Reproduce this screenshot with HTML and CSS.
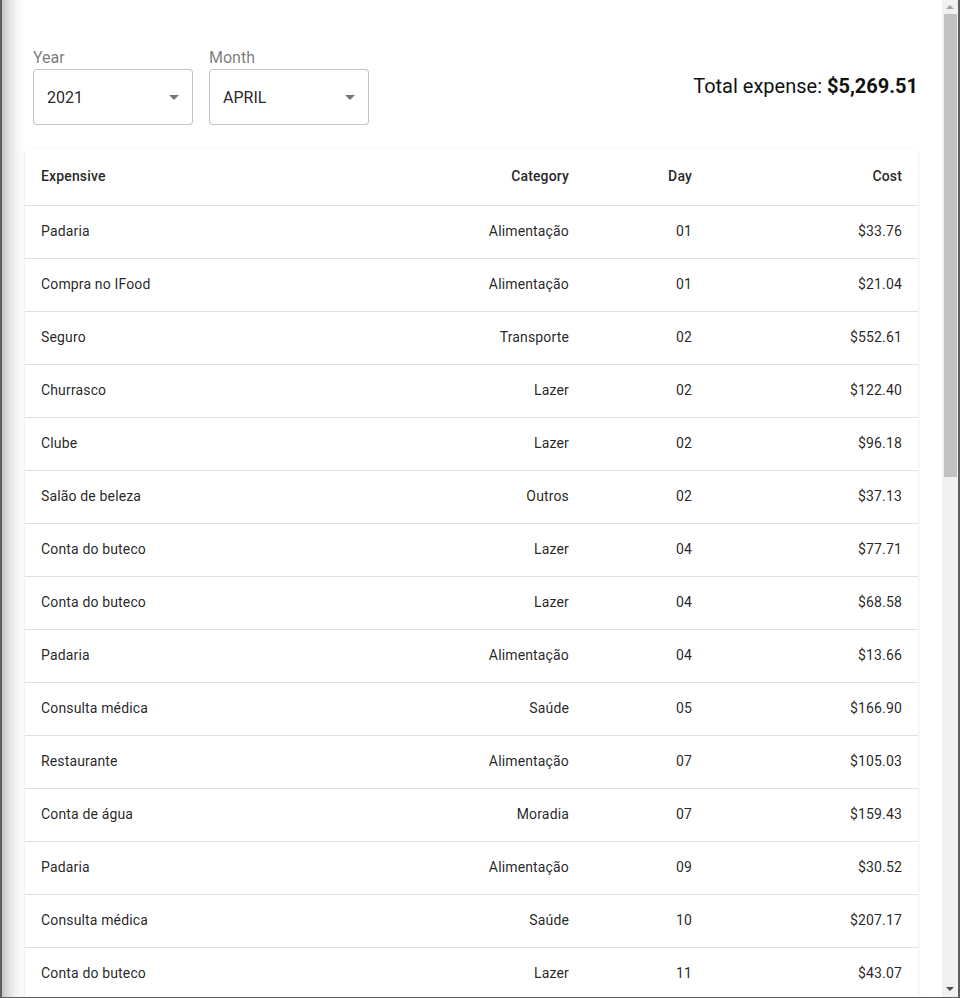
FILE: index.html
```html
<!DOCTYPE html>
<html lang="en">
<head>
<meta charset="utf-8">
<title>Expenses</title>
<link rel="stylesheet" href="styles.css">
</head>
<body>
<div class="window">
  <main class="page">
    <div class="toolbar">
      <div class="filters">
        <div class="field">
          <label class="field-label">Year</label>
          <div class="select">
            <span class="select-value">2021</span>
            <svg class="select-icon" viewBox="0 0 24 24" width="24" height="24"><path d="M7 10l5 5 5-5z"/></svg>
          </div>
        </div>
        <div class="field">
          <label class="field-label">Month</label>
          <div class="select">
            <span class="select-value">APRIL</span>
            <svg class="select-icon" viewBox="0 0 24 24" width="24" height="24"><path d="M7 10l5 5 5-5z"/></svg>
          </div>
        </div>
      </div>
      <div class="total">Total expense: <strong>$5,269.51</strong></div>
    </div>

    <div class="card">
      <table class="table">
        <colgroup>
          <col class="c1"><col class="c2"><col class="c3"><col class="c4">
        </colgroup>
        <thead>
          <tr><th class="left">Expensive</th><th class="right">Category</th><th class="right">Day</th><th class="right">Cost</th></tr>
        </thead>
        <tbody>
          <tr><td>Padaria</td><td class="right">Alimentação</td><td class="right">01</td><td class="right">$33.76</td></tr>
          <tr><td>Compra no IFood</td><td class="right">Alimentação</td><td class="right">01</td><td class="right">$21.04</td></tr>
          <tr><td>Seguro</td><td class="right">Transporte</td><td class="right">02</td><td class="right">$552.61</td></tr>
          <tr><td>Churrasco</td><td class="right">Lazer</td><td class="right">02</td><td class="right">$122.40</td></tr>
          <tr><td>Clube</td><td class="right">Lazer</td><td class="right">02</td><td class="right">$96.18</td></tr>
          <tr><td>Salão de beleza</td><td class="right">Outros</td><td class="right">02</td><td class="right">$37.13</td></tr>
          <tr><td>Conta do buteco</td><td class="right">Lazer</td><td class="right">04</td><td class="right">$77.71</td></tr>
          <tr><td>Conta do buteco</td><td class="right">Lazer</td><td class="right">04</td><td class="right">$68.58</td></tr>
          <tr><td>Padaria</td><td class="right">Alimentação</td><td class="right">04</td><td class="right">$13.66</td></tr>
          <tr><td>Consulta médica</td><td class="right">Saúde</td><td class="right">05</td><td class="right">$166.90</td></tr>
          <tr><td>Restaurante</td><td class="right">Alimentação</td><td class="right">07</td><td class="right">$105.03</td></tr>
          <tr><td>Conta de água</td><td class="right">Moradia</td><td class="right">07</td><td class="right">$159.43</td></tr>
          <tr><td>Padaria</td><td class="right">Alimentação</td><td class="right">09</td><td class="right">$30.52</td></tr>
          <tr><td>Consulta médica</td><td class="right">Saúde</td><td class="right">10</td><td class="right">$207.17</td></tr>
          <tr><td>Conta do buteco</td><td class="right">Lazer</td><td class="right">11</td><td class="right">$43.07</td></tr>
        </tbody>
      </table>
    </div>
  </main>
  <div class="scrollbar">
    <span class="arrow arrow-up"></span>
    <div class="track"><div class="thumb"></div></div>
    <span class="arrow arrow-down"></span>
  </div>
</div>
</body>
</html>
```

FILE: styles.css
```css
* { box-sizing: border-box; }

html, body {
  margin: 0;
  padding: 0;
  height: 998px;
  overflow: hidden;
  background: #fff;
}

body {
  font-family: Roboto, "Liberation Sans", Arial, sans-serif;
  color: rgba(0, 0, 0, 0.87);
}

.window {
  display: flex;
  width: 960px;
  height: 998px;
  border-left: 2px solid #5e5e5e;
  border-right: 2px solid #5e5e5e;
  border-bottom: 1px solid #5e5e5e;
  overflow: hidden;
}

.page {
  flex: 1;
  min-width: 0;
  padding: 48px 24px 0 23px;
  background: linear-gradient(to right, #c4c4c4 0px, #e6e6e6 8px, #f7f7f7 16px, #ffffff 23px);
  overflow: hidden;
}

.toolbar {
  display: flex;
  justify-content: space-between;
  align-items: center;
  padding: 0 0 0 8px;
}

.filters {
  display: flex;
  gap: 16px;
}

.field {
  display: flex;
  flex-direction: column;
}

.field-label {
  font-size: 16px;
  line-height: 19px;
  color: rgba(0, 0, 0, 0.54);
  margin-bottom: 2px;
}

.select {
  position: relative;
  width: 160px;
  height: 56px;
  border: 1px solid rgba(0, 0, 0, 0.23);
  border-radius: 4px;
  display: flex;
  align-items: center;
  padding: 0 13px;
  background: #fff;
}

.select-value {
  font-size: 16px;
  line-height: 19px;
  color: rgba(0, 0, 0, 0.87);
}

.select-icon {
  position: absolute;
  right: 6px;
  top: 15px;
  fill: rgba(0, 0, 0, 0.54);
}

.total {
  font-size: 20px;
  line-height: 28px;
  color: #111;
  padding-bottom: 2px;
}

.total strong {
  font-weight: 700;
}

.card {
  margin-top: 24px;
  background: #fff;
  border-radius: 4px;
  box-shadow: 0 2px 1px -1px rgba(0,0,0,0.2), 0 1px 1px 0 rgba(0,0,0,0.14), 0 1px 3px 0 rgba(0,0,0,0.12);
}

.table {
  width: 100%;
  border-collapse: collapse;
  table-layout: fixed;
  font-size: 14px;
  letter-spacing: 0.01071em;
}

.c1 { width: 375px; }
.c2 { width: 185px; }
.c3 { width: 123px; }
.c4 { width: 210px; }

.table th,
.table td {
  padding: 15px 16px 17px;
  border-bottom: 1px solid #e0e0e0;
  color: rgba(0, 0, 0, 0.87);
  white-space: nowrap;
}

.table th {
  font-weight: 500;
  line-height: 24px;
}

.table td {
  font-weight: 400;
  line-height: 20px;
}

.left { text-align: left; }
.right { text-align: right; }

.scrollbar {
  width: 16px;
  flex: none;
  background: #f1f1f1;
  display: flex;
  flex-direction: column;
  align-items: center;
}

.arrow {
  display: block;
  width: 0;
  height: 0;
  border-left: 4px solid transparent;
  border-right: 4px solid transparent;
}

.arrow-up {
  margin-top: 5px;
  border-bottom: 4px solid #a3a3a3;
}

.arrow-down {
  margin-bottom: 6px;
  border-top: 4px solid #505050;
}

.track {
  flex: 1;
  width: 100%;
  padding: 5px 1px 0 2px;
}

.thumb {
  height: 463px;
  background: #c1c1c1;
}
```
